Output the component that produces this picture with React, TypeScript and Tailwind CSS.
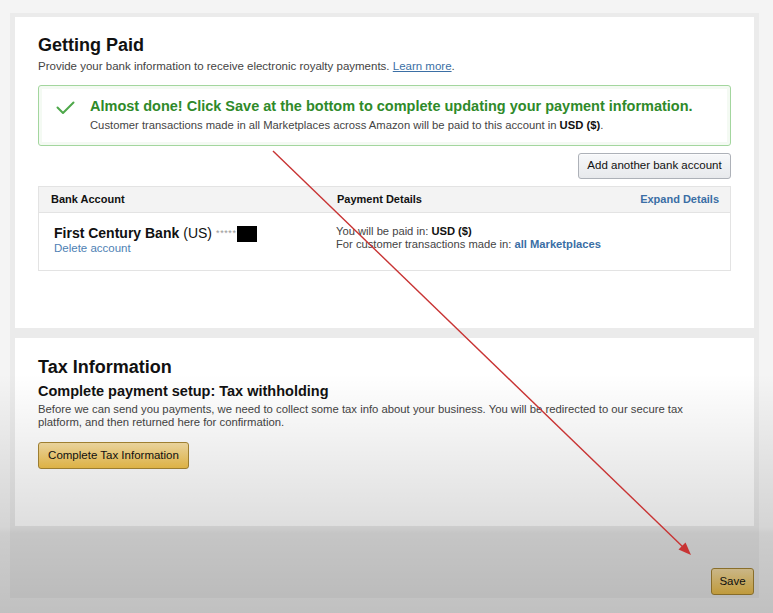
import React from "react";

function Check() {
  return (
    <svg width="20" height="16" viewBox="0 0 20 16" className="shrink-0">
      <path d="M1.5 7.5 L7 13 L17.5 2.5" fill="none" stroke="#4ea84a" strokeWidth="2" strokeLinecap="round" strokeLinejoin="round" />
    </svg>
  );
}

export default function App() {
  return (
    <div className="relative w-[773px] h-[613px] overflow-hidden bg-[#f4f4f4] text-[#333] font-['Liberation_Sans',Arial,sans-serif]">
      <div className="ml-[10px] mt-[13px] w-[749px] h-[585px] bg-[#ebebeb] px-[5px] pt-[4px] flex flex-col">
        {/* Getting Paid card */}
        <div className="bg-white h-[311px] px-[23px] pt-[17px] flex flex-col">
          <h1 className="text-[18px] leading-[22px] font-bold text-[#111]">Getting Paid</h1>
          <p className="mt-[3px] text-[11.5px] leading-[14px] text-[#444]">
            Provide your bank information to receive electronic royalty payments.{" "}
            <span className="text-[#3b6fa5] underline">Learn more</span>.
          </p>
          <div className="mt-[12px] border border-[#a3d69e] rounded-[3px] shadow-[inset_0_0_0_3px_#f4faf3] pt-[12px] pb-[13px] flex">
            <div className="pl-[17px] w-[51px] pt-[2px]">
              <Check />
            </div>
            <div className="flex flex-col">
              <div className="text-[14.5px] leading-[17px] font-bold text-[#2f8a2a]">
                Almost done! Click Save at the bottom to complete updating your payment information.
              </div>
              <div className="mt-[3px] text-[11.25px] leading-[14px] text-[#444]">
                Customer transactions made in all Marketplaces across Amazon will be paid to this account in{" "}
                <span className="font-bold text-[#111]">USD ($)</span>.
              </div>
            </div>
          </div>
          <div className="mt-[7px] flex justify-end">
            <button className="h-[26px] w-[153px] rounded-[3px] border border-[#adb1b8] bg-[linear-gradient(to_bottom,#f7f8fa,#e7e9ec)] text-[11.5px] text-[#111] shadow-[0_1px_0_rgba(255,255,255,0.6)_inset]">
              Add another bank account
            </button>
          </div>
          <div className="mt-[7px] border border-[#e3e3e3]">
            <div className="h-[26px] bg-[#f3f3f3] border-b border-[#e3e3e3] grid grid-cols-[285px_1fr] items-center text-[11px] font-bold text-[#111]">
              <div className="pl-[12px]">Bank Account</div>
              <div className="flex justify-between pr-[11px] pl-[13px]">
                <span>Payment Details</span>
                <span className="text-[#3a6ea5]">Expand Details</span>
              </div>
            </div>
            <div className="h-[57px] grid grid-cols-[285px_1fr]">
              <div className="pl-[15px] pt-[12px]">
                <div className="flex items-center text-[14px] leading-[17px] text-[#111]">
                  <span className="font-bold">First Century Bank</span>
                  <span className="ml-[4px]">(US)</span>
                  <span className="ml-[4px] text-[9px] leading-[9px] tracking-[0.6px] text-[#999] self-start mt-[4px]">*****</span>
                  <span className="ml-[0px] inline-block w-[20px] h-[16px] bg-black"></span>
                </div>
                <div className="text-[11.5px] leading-[13px] text-[#4e7fb4]">Delete account</div>
              </div>
              <div className="pl-[12px] pt-[12px] text-[11.2px] leading-[12.7px] text-[#444]">
                <div>
                  You will be paid in: <span className="font-bold text-[#111]">USD ($)</span>
                </div>
                <div>
                  For customer transactions made in: <span className="font-bold text-[#3a6ea5]">all Marketplaces</span>
                </div>
              </div>
            </div>
          </div>
        </div>

        {/* Tax Information card */}
        <div className="mt-[10px] bg-white h-[188px] px-[23px] pt-[18px] flex flex-col">
          <h2 className="text-[18px] leading-[22px] font-bold text-[#111]">Tax Information</h2>
          <h3 className="mt-[4px] text-[14.5px] leading-[18px] font-bold text-[#111]">Complete payment setup: Tax withholding</h3>
          <p className="mt-[3px] text-[11.3px] leading-[13.33px] text-[#444] w-[660px]">
            Before we can send you payments, we need to collect some tax info about your business. You will be redirected to our secure tax platform, and then returned here for confirmation.
          </p>
          <div className="mt-[12px]">
            <button className="h-[27px] w-[151px] rounded-[3px] border border-[#a88734] bg-[linear-gradient(to_bottom,#f7dfa5,#f0c14b)] text-[11.5px] text-[#111]">
              Complete Tax Information
            </button>
          </div>
        </div>

        {/* Footer */}
        <div className="flex-1 flex justify-end items-end pb-[3px]">
          <button className="h-[27px] w-[43px] rounded-[3px] border border-[#a88734] bg-[linear-gradient(to_bottom,#f7dfa5,#f0c14b)] text-[11.5px] text-[#111]">
            Save
          </button>
        </div>
      </div>

      {/* video vignette overlay */}
      <div className="pointer-events-none absolute inset-0 bg-[linear-gradient(to_bottom,rgba(0,0,0,0)_0%,rgba(0,0,0,0)_61%,rgba(0,0,0,0.13)_86%,rgba(0,0,0,0.16)_87%,rgba(0,0,0,0.21)_100%)]"></div>

      {/* red annotation arrow */}
      <svg className="pointer-events-none absolute inset-0" width="773" height="613" viewBox="0 0 773 613">
        <line x1="273" y1="151" x2="684" y2="548" stroke="#c83434" strokeWidth="1.4" />
        <polygon points="691,555 678.5,549.5 685.5,542.5" fill="#c83434" />
      </svg>
    </div>
  );
}
